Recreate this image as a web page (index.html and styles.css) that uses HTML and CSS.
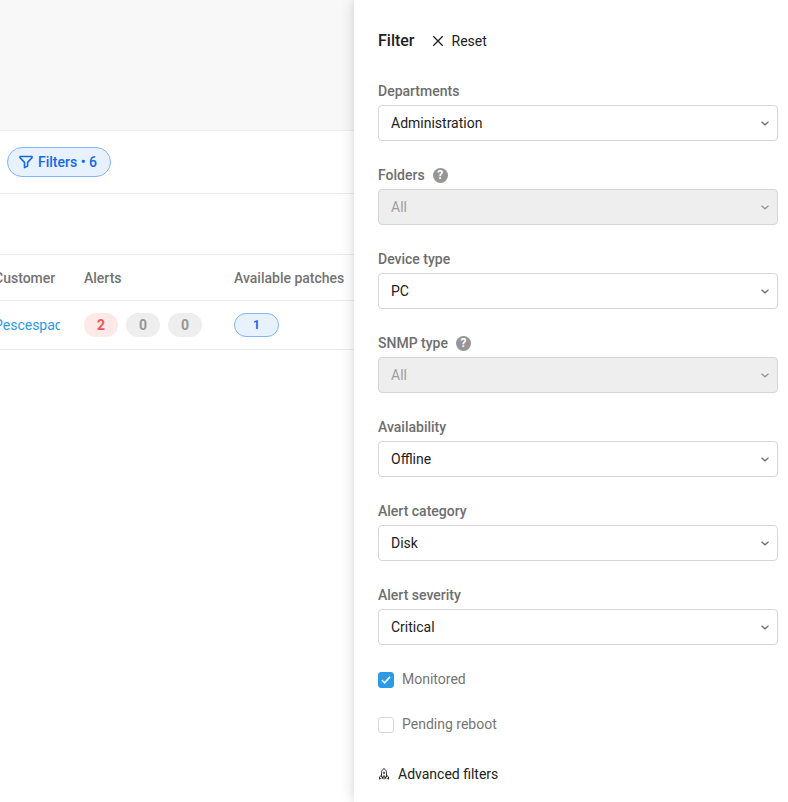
FILE: index.html
```html
<!DOCTYPE html>
<html lang="en">
<head>
  <meta charset="UTF-8">
  <meta name="viewport" content="width=device-width, initial-scale=1.0">
  <title>Devices</title>
  <link rel="stylesheet" href="styles.css">
</head>
<body>
  <div class="layout">
    <main class="content">
      <div class="page-top"></div>
      <div class="toolbar">
        <button type="button" class="filters-button">
          <svg width="14" height="14" viewBox="0 0 14 14" fill="none" stroke="currentColor" stroke-width="1.6" stroke-linejoin="round"><path d="M1 1.5h12v1.2L8.6 7.4v3.7L5.5 12.6V7.4L1 2.7z"/></svg>
          Filters • 6
        </button>
      </div>
      <div class="subbar"></div>
      <table class="devices">
        <thead>
          <tr>
            <th class="col-customer">Customer</th>
            <th class="col-alerts">Alerts</th>
            <th>Available patches</th>
          </tr>
        </thead>
        <tbody>
          <tr>
            <td><a href="#" class="customer">Pescespada</a></td>
            <td>
              <div class="badges">
                <span class="badge critical">2</span>
                <span class="badge">0</span>
                <span class="badge">0</span>
              </div>
            </td>
            <td><button type="button" class="patches">1</button></td>
          </tr>
        </tbody>
      </table>
    </main>

    <aside class="drawer">
      <div class="drawer-header">
        <h2>Filter</h2>
        <button type="button" class="plain-button">
          <svg width="12" height="12" viewBox="0 0 12 12" fill="none" stroke="currentColor" stroke-width="1.3"><path d="M1.3 1.3l9.4 9.4M10.7 1.3l-9.4 9.4"/></svg>
          Reset
        </button>
      </div>

      <form class="filter-form">
        <div class="field">
          <div class="field-label"><label for="departments">Departments</label></div>
          <div class="select-box">
            <select id="departments"><option>Administration</option></select>
            <svg width="8" height="5" viewBox="0 0 8 5"><path d="M.5.7L4 3.8 7.5.7"/></svg>
          </div>
        </div>
        <div class="field">
          <div class="field-label">
            <label for="folders">Folders</label>
            <span class="help">?</span>
          </div>
          <div class="select-box">
            <select id="folders" disabled><option>All</option></select>
            <svg width="8" height="5" viewBox="0 0 8 5"><path d="M.5.7L4 3.8 7.5.7"/></svg>
          </div>
        </div>
        <div class="field">
          <div class="field-label"><label for="device-type">Device type</label></div>
          <div class="select-box">
            <select id="device-type"><option>PC</option></select>
            <svg width="8" height="5" viewBox="0 0 8 5"><path d="M.5.7L4 3.8 7.5.7"/></svg>
          </div>
        </div>
        <div class="field">
          <div class="field-label">
            <label for="snmp-type">SNMP type</label>
            <span class="help">?</span>
          </div>
          <div class="select-box">
            <select id="snmp-type" disabled><option>All</option></select>
            <svg width="8" height="5" viewBox="0 0 8 5"><path d="M.5.7L4 3.8 7.5.7"/></svg>
          </div>
        </div>
        <div class="field">
          <div class="field-label"><label for="availability">Availability</label></div>
          <div class="select-box">
            <select id="availability"><option>Offline</option></select>
            <svg width="8" height="5" viewBox="0 0 8 5"><path d="M.5.7L4 3.8 7.5.7"/></svg>
          </div>
        </div>
        <div class="field">
          <div class="field-label"><label for="alert-category">Alert category</label></div>
          <div class="select-box">
            <select id="alert-category"><option>Disk</option></select>
            <svg width="8" height="5" viewBox="0 0 8 5"><path d="M.5.7L4 3.8 7.5.7"/></svg>
          </div>
        </div>
        <div class="field">
          <div class="field-label"><label for="alert-severity">Alert severity</label></div>
          <div class="select-box">
            <select id="alert-severity"><option>Critical</option></select>
            <svg width="8" height="5" viewBox="0 0 8 5"><path d="M.5.7L4 3.8 7.5.7"/></svg>
          </div>
        </div>

        <div class="check">
          <span class="check-box">
            <input type="checkbox" id="monitored" checked>
            <svg width="10" height="8" viewBox="0 0 10 8"><path d="M.9 4.2l2.7 2.6L9 .9"/></svg>
          </span>
          <label for="monitored">Monitored</label>
        </div>
        <div class="check">
          <span class="check-box">
            <input type="checkbox" id="pending-reboot">
          </span>
          <label for="pending-reboot">Pending reboot</label>
        </div>
      </form>

      <button type="button" class="plain-button advanced">
        <svg width="12" height="12" viewBox="0 0 12 12" fill="none" stroke="currentColor" stroke-width=".9" stroke-linejoin="round"><path d="M3.5 9V4.6C3.5 2.8 4.5 1.4 6 .6c1.5.8 2.5 2.2 2.5 4V9z"/><circle cx="6" cy="4.8" r=".8"/><path d="M3.5 7L1.5 9v2.2l2-1.1M8.5 7l2 2v2.2l-2-1.1M4.6 9v1.8M6 6.8v4.6M7.4 9v1.8"/></svg>
        Advanced filters
      </button>
    </aside>
  </div>
</body>
</html>
```

FILE: styles.css
```css
* {
  box-sizing: border-box;
}
body {
  margin: 0;
  font-family: Roboto, "Liberation Sans", sans-serif;
  font-size: 14px;
  line-height: 20px;
  color: #212121;
  background-color: #fff;
}
button, select {
  font: inherit;
  color: inherit;
}
button {
  cursor: pointer;
}
.layout {
  display: flex;
  min-height: 100vh;
}

/* device list */
.content {
  flex: 1;
  min-width: 0;
  overflow: hidden;
}
.page-top {
  height: 131px;
  background-color: #f8f8f8;
  border-bottom: 1px solid #eee;
}
.toolbar {
  padding: 16px 7px;
  border-bottom: 1px solid #ebebeb;
}
.filters-button {
  display: flex;
  align-items: center;
  gap: 5px;
  height: 30px;
  padding: 0 13px 0 11px;
  border: 1px solid #82b5fb;
  border-radius: 15px;
  background-color: #e8f2ff;
  color: #126ae8;
  font-weight: 500;
}
.subbar {
  height: 61px;
  border-bottom: 1px solid #ebebeb;
}
.devices {
  width: 480px;
  margin-left: -6px;
  table-layout: fixed;
  border-collapse: separate;
  border-spacing: 0;
}
.devices th, .devices td {
  padding: 0 24px 0 0;
  border-bottom: 1px solid #ebebeb;
  text-align: left;
}
.devices th {
  height: 46px;
  color: #737373;
  font-weight: 500;
}
.devices td {
  height: 49px;
}
.devices .col-customer {
  width: 90px;
}
.devices .col-alerts {
  width: 150px;
}
.customer {
  display: block;
  overflow: hidden;
  white-space: nowrap;
  color: #2b9be6;
  text-decoration: none;
}
.badges {
  display: flex;
  gap: 8px;
}
.badge {
  flex: none;
  width: 34px;
  border-radius: 12px;
  line-height: 24px;
  text-align: center;
  font-weight: 700;
  color: #969696;
  background-color: #eee;
}
.badge.critical {
  color: #f25555;
  background-color: #fee9e9;
}
.patches {
  display: block;
  width: 45px;
  height: 24px;
  padding: 0;
  border: 1px solid #82b5fb;
  border-radius: 12px;
  background-color: #e8f2ff;
  color: #126ae8;
  font-size: 12px;
  font-weight: 700;
}

/* filter drawer */
.drawer {
  flex: 0 1 434px;
  padding: 29px 10px 17px 24px;
  background-color: #fff;
  box-shadow: 0 0 12px rgba(0, 0, 0, 0.18);
}
.drawer-header {
  display: flex;
  align-items: center;
  gap: 17px;
  margin-bottom: 28px;
}
.drawer-header h2 {
  margin: 0;
  font-size: 16px;
  line-height: 24px;
  font-weight: 500;
}
.plain-button {
  display: flex;
  align-items: center;
  gap: 8px;
  padding: 0;
  border: 0;
  background: none;
}
.field {
  margin-bottom: 24px;
}
.field-label {
  display: flex;
  align-items: center;
  gap: 8px;
  margin-bottom: 4px;
  color: #6e6e6e;
  font-weight: 500;
}
.help {
  width: 15px;
  border-radius: 50%;
  background-color: #969696;
  color: #fff;
  font-size: 12px;
  line-height: 15px;
  font-weight: 700;
  text-align: center;
}
.select-box {
  display: grid;
  align-items: center;
}
.select-box select, .select-box svg {
  grid-area: 1 / 1;
}
.select-box select {
  appearance: none;
  width: 100%;
  height: 36px;
  padding: 0 32px 0 12px;
  border: 1px solid #d6d6d6;
  border-radius: 4px;
  background-color: #fff;
}
.select-box select:disabled {
  background-color: #eee;
  color: #9e9e9e;
  opacity: 1;
}
.select-box svg {
  justify-self: end;
  margin-right: 9px;
  fill: none;
  stroke: #6e6e6e;
  stroke-width: 1.3;
  pointer-events: none;
}
.select-box select:disabled + svg {
  stroke: #969696;
}
.check {
  display: flex;
  align-items: center;
  gap: 8px;
  height: 20px;
  margin-bottom: 25px;
  color: #757575;
}
.check-box {
  display: grid;
  place-items: center;
  margin-top: 2px;
}
.check-box input, .check-box svg {
  grid-area: 1 / 1;
}
.check-box input {
  appearance: none;
  width: 16px;
  height: 16px;
  margin: 0;
  border: 1px solid #d6d6d6;
  border-radius: 3px;
  background-color: #fff;
}
.check-box input:checked {
  border-color: #2b9be6;
  background-color: #2b9be6;
}
.check-box svg {
  fill: none;
  stroke: #fff;
  stroke-width: 1.6;
  pointer-events: none;
}
.advanced {
  margin-top: 30px;
}
```
